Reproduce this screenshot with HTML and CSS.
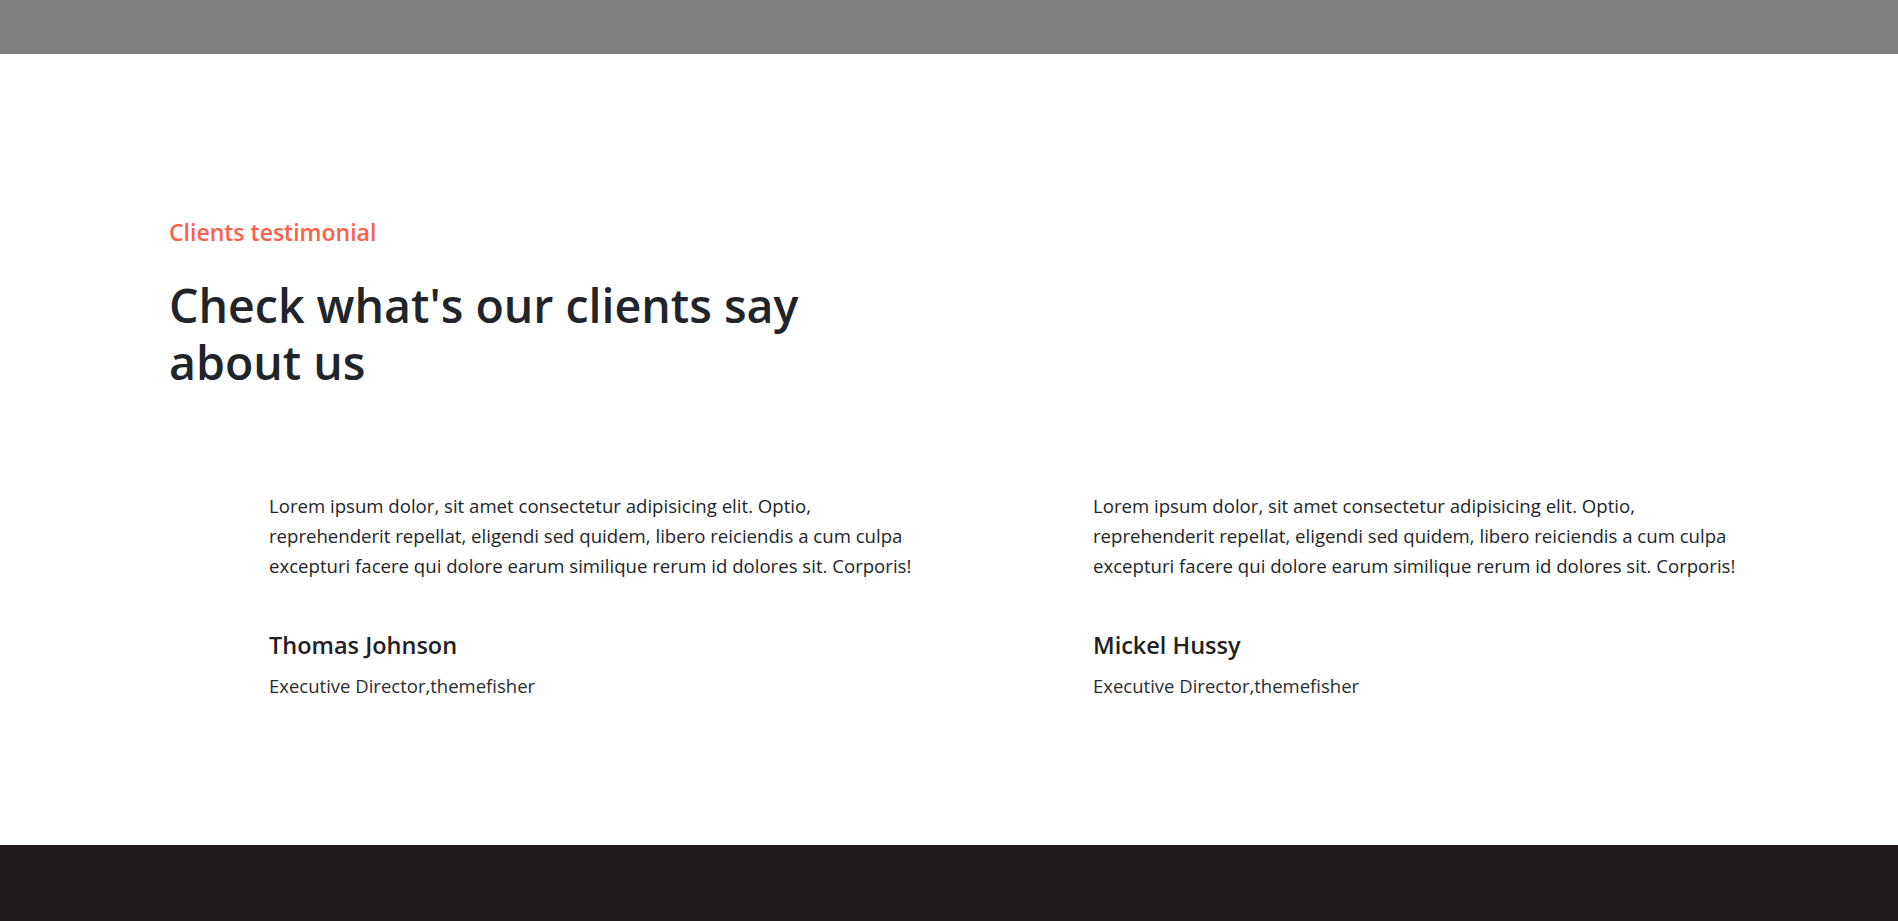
FILE: index.html
```html
<!DOCTYPE html>
<html lang="en">
<head>
<meta charset="utf-8">
<title>Clients testimonial</title>
<link rel="stylesheet" href="styles.css">
</head>
<body>
<header class="topbar"></header>
<section class="testimonial">
  <div class="container">
    <div class="section-title">
      <span class="eyebrow">Clients testimonial</span>
      <h2 class="title">Check what's our clients say about us</h2>
    </div>
    <div class="slides">
      <div class="slide">
        <p class="quote">Lorem ipsum dolor, sit amet consectetur adipisicing elit. Optio, reprehenderit repellat, eligendi sed quidem, libero reiciendis a cum culpa excepturi facere qui dolore earum similique rerum id dolores sit. Corporis!</p>
        <h4 class="name">Thomas Johnson</h4>
        <span class="role">Executive Director,themefisher</span>
      </div>
      <div class="slide">
        <p class="quote">Lorem ipsum dolor, sit amet consectetur adipisicing elit. Optio, reprehenderit repellat, eligendi sed quidem, libero reiciendis a cum culpa excepturi facere qui dolore earum similique rerum id dolores sit. Corporis!</p>
        <h4 class="name">Mickel Hussy</h4>
        <span class="role">Executive Director,themefisher</span>
      </div>
    </div>
  </div>
</section>
<footer class="footer"></footer>
</body>
</html>
```
FILE: styles.css
```css
* { box-sizing: border-box; }
html, body { margin: 0; padding: 0; }
body {
  font-family: "Open Sans", "Noto Sans", sans-serif;
  color: #212529;
  background: #ffffff;
}
.topbar {
  height: 54px;
  background: #808080;
}
.testimonial {
  padding: 165px 0 145px;
}
.container {
  width: 1560px;
  margin: 0 auto;
}
.section-title {
  display: flex;
  flex-direction: column;
  gap: 31px;
}
.eyebrow {
  display: block;
  font-size: 23px;
  line-height: 27px;
  font-weight: 600;
  color: #fe5f4b;
}
.title {
  margin: 0;
  max-width: 720px;
  font-size: 46.5px;
  line-height: 57px;
  font-weight: 600;
  color: #212529;
}
.slides {
  display: grid;
  grid-template-columns: 660px 660px;
  column-gap: 164px;
  padding-left: 100px;
  margin-top: 100px;
}
.slide {
  display: flex;
  flex-direction: column;
}
.quote {
  margin: 0 0 50px;
  font-size: 18.6px;
  line-height: 30px;
  color: #212529;
}
.name {
  margin: 0 0 13px;
  font-size: 23.5px;
  line-height: 28px;
  font-weight: 600;
  color: #1f2124;
}
.role {
  font-size: 18.5px;
  line-height: 28px;
  color: #2a2d31;
}
.footer {
  height: 160px;
  background: #201a1a;
}
```
